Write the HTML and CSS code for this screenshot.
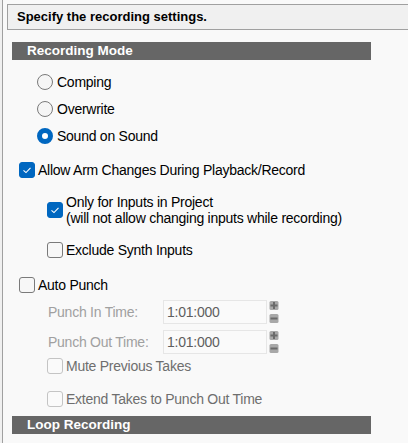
FILE: index.html
```html
<!DOCTYPE html>
<html lang="en">
<head>
<meta charset="UTF-8">
<title>Recording Settings</title>
<link rel="stylesheet" href="styles.css">
</head>
<body>
  <div class="frame">
    <div class="banner">Specify the recording settings.</div>

    <div class="section">Recording Mode</div>

    <div class="radio-group">
      <label class="row radio-row">
        <span class="radio"></span>
        <span>Comping</span>
      </label>
      <label class="row radio-row">
        <span class="radio"></span>
        <span>Overwrite</span>
      </label>
      <label class="row radio-row">
        <span class="radio selected"></span>
        <span>Sound on Sound</span>
      </label>
    </div>

    <label class="row level-1 allow-row">
      <span class="check checked">
        <svg viewBox="0 0 16 16" width="16" height="16"><path d="M4.5 8.3 L7 10.6 L11.5 5.8" fill="none" stroke="#fff" stroke-width="1.1"/></svg>
      </span>
      <span>Allow Arm Changes During Playback/Record</span>
    </label>

    <label class="row level-2 only-row">
      <span class="check checked">
        <svg viewBox="0 0 16 16" width="16" height="16"><path d="M4.5 8.3 L7 10.6 L11.5 5.8" fill="none" stroke="#fff" stroke-width="1.1"/></svg>
      </span>
      <span class="two-line">Only for Inputs in Project<br>(will not allow changing inputs while recording)</span>
    </label>

    <label class="row level-2 exclude-row">
      <span class="check"></span>
      <span>Exclude Synth Inputs</span>
    </label>

    <label class="row level-1 punch-row">
      <span class="check"></span>
      <span>Auto Punch</span>
    </label>

    <div class="time-row punch-in">
      <span class="time-label">Punch In Time:</span>
      <span class="time-input">1:01:000</span>
      <svg class="spin" viewBox="0 0 10 22" width="10" height="22">
        <rect x="0.5" y="0" width="9" height="9" rx="1.5" fill="#a8a8a8"/>
        <rect x="0.5" y="13" width="9" height="9" rx="1.5" fill="#a8a8a8"/>
        <rect x="1.5" y="3.5" width="7" height="2" fill="#6a6a6a"/>
        <rect x="4" y="1" width="2" height="7" fill="#6a6a6a"/>
        <rect x="1.5" y="16.5" width="7" height="2" fill="#6a6a6a"/>
      </svg>
    </div>

    <div class="time-row punch-out">
      <span class="time-label">Punch Out Time:</span>
      <span class="time-input">1:01:000</span>
      <svg class="spin" viewBox="0 0 10 22" width="10" height="22">
        <rect x="0.5" y="0" width="9" height="9" rx="1.5" fill="#a8a8a8"/>
        <rect x="0.5" y="13" width="9" height="9" rx="1.5" fill="#a8a8a8"/>
        <rect x="1.5" y="3.5" width="7" height="2" fill="#6a6a6a"/>
        <rect x="4" y="1" width="2" height="7" fill="#6a6a6a"/>
        <rect x="1.5" y="16.5" width="7" height="2" fill="#6a6a6a"/>
      </svg>
    </div>

    <label class="row level-2 disabled mute-row">
      <span class="check"></span>
      <span>Mute Previous Takes</span>
    </label>

    <label class="row level-2 disabled extend-row">
      <span class="check"></span>
      <span>Extend Takes to Punch Out Time</span>
    </label>

    <div class="section loop">Loop Recording</div>
  </div>
</body>
</html>
```

FILE: styles.css
```css
html {
  font-family: "Liberation Sans", Arial, sans-serif;
  font-size: 14px;
  letter-spacing: -0.25px;
  color: #000;
}

body {
  margin: 0;
  background: #f0f0f0;
  overflow: hidden;
}

.frame {
  margin-left: 2px;
  border-left: 1px solid #a0a0a0;
  min-height: 443px;
  background: #f9f9f9;
  display: flex;
  flex-direction: column;
}

/* top caption box */
.banner {
  margin: 4px 0 0 4px;
  height: 24px;
  border: 1px solid #a0a0a0;
  border-right: none;
  background: #f0f0f0;
  padding-left: 9px;
  font-weight: bold;
  font-size: 13px;
  letter-spacing: 0;
  line-height: 24px;
}

/* dark section header */
.section {
  margin: 12px 0 0 9px;
  width: 344px;
  height: 18px;
  padding-left: 15px;
  background: #666666;
  color: #fff;
  font-weight: bold;
  font-size: 13.5px;
  letter-spacing: 0;
  line-height: 18px;
}

.row {
  display: flex;
  align-items: center;
}

.radio-group {
  margin-top: 8px;
  padding-left: 34px;
}

.radio-row {
  height: 27px;
}

.radio {
  box-sizing: border-box;
  width: 16px;
  height: 16px;
  border: 1px solid #7a7a7a;
  border-radius: 50%;
  background: #f5f5f5;
  margin-right: 4px;
}

.radio.selected {
  border: 5px solid #0067c0;
  background: #fff;
}

.check {
  box-sizing: border-box;
  width: 16px;
  height: 16px;
  border: 1px solid #7a7a7a;
  border-radius: 3px;
  background: #f7f7f7;
  margin-right: 3px;
  flex: none;
}

.check svg {
  display: block;
  margin: -1px;
}

.check.checked {
  border-color: #0067c0;
  background: #0067c0;
}

.level-1 {
  padding-left: 16px;
}

.level-2 {
  padding-left: 44px;
}

.allow-row {
  margin-top: 7px;
  height: 28px;
}

.only-row {
  margin-top: 10px;
  height: 32px;
}

.two-line {
  line-height: 16px;
}

.exclude-row {
  margin-top: 10px;
  height: 27px;
}

.punch-row {
  margin-top: 8px;
  height: 27px;
}

.time-row {
  display: flex;
  align-items: center;
  height: 24px;
  padding-left: 45px;
}

.punch-in {
  margin-top: 2px;
}

.punch-out {
  margin-top: 6px;
}

.time-label {
  width: 115px;
  color: #a0a0a0;
}

.time-input {
  box-sizing: border-box;
  width: 104px;
  height: 24px;
  border: 1px solid #e6e6e6;
  background: #fafafa;
  padding-left: 3px;
  line-height: 22px;
  color: #5e5e5e;
}

.spin {
  margin-left: 2px;
}

.disabled {
  color: #6e6e6e;
}

.disabled .check {
  border-color: #c4c4c4;
  background: #fafafa;
}

.mute-row {
  height: 24px;
}

.extend-row {
  margin-top: 7px;
  height: 27px;
}

.loop {
  margin-top: 4px;
}
```
